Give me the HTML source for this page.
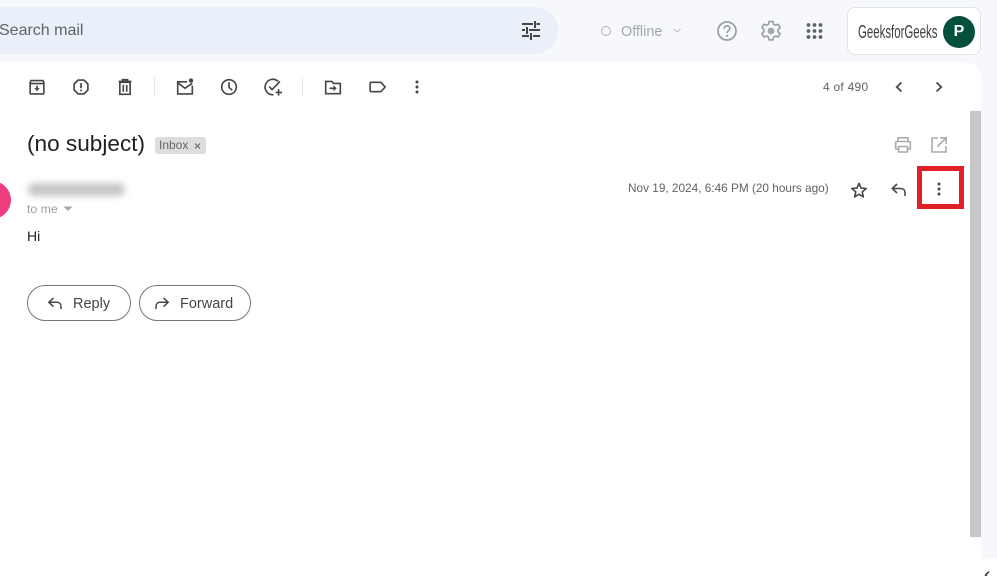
<!DOCTYPE html>
<html><head><meta charset="utf-8">
<style>
html,body{margin:0;padding:0;width:997px;height:576px;overflow:hidden;background:#f6f8fc;font-family:"Liberation Sans",sans-serif;}
#p{position:absolute;left:0;top:0;width:997px;height:576px;overflow:hidden;background:#f6f8fc}
.a{position:absolute;white-space:nowrap}
svg{position:absolute;overflow:visible;fill:none;stroke-linecap:butt}
.t{transform:scale(.86);transform-origin:50% 50%}
</style></head><body><div id="p">
<div class="a" style="left:-30px;top:7px;width:588px;height:47px;background:#e9f0fa;border-radius:24px"></div>
<div class="a" style="left:-1px;top:22px;font-size:16px;line-height:18px;color:#5f6368">Search mail</div>
<svg style="left:519px;top:18px" width="24" height="24" viewBox="0 0 24 24" stroke="#444746" stroke-width="2"><path d="M3 6h11M17.500 6H21M16 3v7M3 12h3M10 12h11M8 9v7M3 18h7M14 18h7M12 15v7"/></svg>
<div class="a" style="left:601px;top:26px;width:8px;height:8px;border:1.800px solid #b0b3b6;border-radius:50%"></div>
<div class="a" style="left:621px;top:24px;font-size:14.400px;line-height:16px;color:#a5a8ab">Offline</div>
<svg style="left:672px;top:28px" width="10" height="6" stroke="#c3c5c8" stroke-width="1.200"><path d="M1.500 1l3.500 3 3.500-3"/></svg>
<svg style="left:715px;top:19px" width="24" height="24" viewBox="0 0 24 24" stroke="#9a9da0" stroke-width="1.700"><circle cx="12" cy="12" r="9"/><path d="M9.200 9.700c0-1.700 1.300-2.800 2.900-2.800s2.800 1 2.800 2.500c0 2.200-2.800 2.300-2.800 4.600"/><path d="M12.100 15.800v2" stroke-width="1.900"/></svg>
<svg style="left:759px;top:19px" width="24" height="24" viewBox="0 0 24 24"><path d="M10 2.500h4l.5 2.700 2 1.100 2.600-1 2 3.400-2.100 1.800v2.300l2.100 1.700-2 3.500-2.600-1-2 1.200-.5 2.700h-4l-.5-2.700-2-1.200-2.600 1-2-3.500 2.100-1.700V10.500L2.900 8.700l2-3.400 2.600 1 2-1.100z" stroke="#9a9da0" stroke-width="1.600" stroke-linejoin="round"/><circle cx="12" cy="12" r="3.400" fill="#a5a8ab"/></svg>
<svg style="left:806px;top:22px" width="18" height="18"><g fill="#5f6368"><circle cx="2.500" cy="3" r="1.900"/><circle cx="8.500" cy="3" r="1.900"/><circle cx="14.500" cy="3" r="1.900"/><circle cx="2.500" cy="9" r="1.900"/><circle cx="8.500" cy="9" r="1.900"/><circle cx="14.500" cy="9" r="1.900"/><circle cx="2.500" cy="15" r="1.900"/><circle cx="8.500" cy="15" r="1.900"/><circle cx="14.500" cy="15" r="1.900"/></g></svg>
<div class="a" style="left:847px;top:7px;width:132px;height:46px;background:#fff;border:1px solid #e1e4e8;border-radius:8px"></div>
<div class="a" style="left:858px;top:22px;font-size:18px;line-height:20px;color:#3c4043;transform:scaleX(.635);transform-origin:0 0;width:120px">GeeksforGeeks</div>
<div class="a" style="left:943px;top:16px;width:32px;height:32px;border-radius:50%;background:#04503c;color:#fff;font-size:16px;font-weight:bold;line-height:32px;text-align:center">P</div>

<div class="a" style="left:-20px;top:62px;width:1001px;height:520px;background:#fff;border-radius:16px 16px 0 0"></div>

<svg class="t" style="left:25px;top:75px" width="24" height="24" viewBox="0 0 24 24" stroke="#444746" stroke-width="1.900"><path d="M5 4.500h14l1 2.500v12a1 1 0 0 1-1 1H5a1 1 0 0 1-1-1V7zM4 8h16"/><path d="M12 10.500v5" stroke-width="2"/><path d="M8.800 13.300h6.400L12 17z" fill="#444746" stroke="none"/></svg>
<svg class="t" style="left:69px;top:75px" width="24" height="24" viewBox="0 0 24 24" stroke="#444746" stroke-width="1.900"><path d="M8.500 4h7L20 8.500v7L15.500 20h-7L4 15.500v-7z" stroke-linejoin="round"/><path d="M12 7.500v6M12 15v2" stroke-width="2"/></svg>
<svg class="t" style="left:113px;top:75px" width="24" height="24" viewBox="0 0 24 24" stroke="#444746" stroke-width="1.900"><path d="M6 6.500h12V20.500H6zM4.500 5.500h15M9 5V3.500h6V5M10 9.500v8M14 9.500v8"/></svg>
<div class="a" style="left:154px;top:77px;width:1px;height:20px;background:#e6e8ea"></div>
<svg class="t" style="left:173px;top:75px" width="24" height="24" viewBox="0 0 24 24" stroke="#444746" stroke-width="1.900"><path d="M14.500 6H3.500v14h17V10.500"/><path d="M3.500 7L12 13.500l8.500-5.800"/><circle cx="19" cy="4.500" r="2.500" fill="#444746" stroke="none"/></svg>
<svg class="t" style="left:217px;top:75px" width="24" height="24" viewBox="0 0 24 24" stroke="#444746" stroke-width="1.900"><circle cx="12" cy="12" r="8.500"/><path d="M12 6.500v6l3.800 3.300"/></svg>
<svg class="t" style="left:261px;top:75px" width="24" height="24" viewBox="0 0 24 24" stroke="#444746" stroke-width="1.900"><path d="M18 5.500A9 9 0 1 0 12.500 21"/><path d="M7.500 11.500l3.500 3.500L20 5.500"/><path d="M18.500 14.500v7.500M15 18.300h7.500"/></svg>
<div class="a" style="left:302px;top:77px;width:1px;height:20px;background:#e6e8ea"></div>
<svg class="t" style="left:321px;top:75px" width="24" height="24" viewBox="0 0 24 24" stroke="#444746" stroke-width="1.900"><path d="M3.500 5.500h7l2 2.300h8v12h-17z"/><path d="M8 13.500h6.500"/><path d="M12.500 10l3.800 3.500-3.800 3.500z" fill="#444746" stroke="none"/></svg>
<svg class="t" style="left:365px;top:75px" width="24" height="24" viewBox="0 0 24 24" stroke="#444746" stroke-width="1.900"><path d="M4.500 6.500h12l5 5.500-5 5.500h-11a1.500 1.500 0 0 1-1.500-1.500V8z" stroke-linejoin="round"/></svg>
<svg style="left:405px;top:75px" width="24" height="24" viewBox="0 0 24 24"><g fill="#444746"><circle cx="12" cy="7" r="1.500"/><circle cx="12" cy="12" r="1.500"/><circle cx="12" cy="17" r="1.500"/></g></svg>

<div class="a" style="left:823px;top:80px;font-size:12px;line-height:15px;color:#5f6368;letter-spacing:.25px">4 of 490</div>
<svg style="left:892px;top:80px" width="14" height="14" stroke="#444746" stroke-width="1.800"><path d="M9.500 2.500L4.800 7l4.700 4.500"/></svg>
<svg style="left:932px;top:80px" width="14" height="14" stroke="#444746" stroke-width="1.800"><path d="M4.500 2.500L9.200 7l-4.700 4.500"/></svg>

<div class="a" style="left:27px;top:130px;font-size:22.600px;line-height:28px;color:#1f1f1f">(no subject)</div>
<div class="a" style="left:155px;top:137px;width:51px;height:17px;background:#dddddd;border-radius:3px"></div>
<div class="a" style="left:159px;top:137px;font-size:12px;line-height:16px;color:#666">Inbox</div>
<svg style="left:194px;top:142px" width="8" height="8" stroke="#666" stroke-width="1.100"><path d="M1 1.500l5 5M6 1.500l-5 5"/></svg>

<svg style="left:893px;top:135px" width="20" height="20" viewBox="0 0 20 20" stroke="#a9abae" stroke-width="1.600"><path d="M5 6.500V2.800h10v3.700M5 14H2.700V7.500a1 1 0 0 1 1-1h12.600a1 1 0 0 1 1 1V14H15M5.500 11.500h9V17h-9z"/></svg>
<svg style="left:929px;top:135px" width="20" height="20" viewBox="0 0 20 20" stroke="#a9abae" stroke-width="1.600"><path d="M9 3H3v14h14v-6M11 2.800h6.200V9M17 3L8.500 11.500"/></svg>

<div class="a" style="left:-27px;top:181px;width:38px;height:38px;border-radius:50%;background:#ee3d7f"></div>
<div class="a" style="left:28px;top:183px;width:97px;height:13px;background:#c6c6c6;border-radius:6px;filter:blur(3.500px)"></div>
<div class="a" style="left:27px;top:202px;font-size:12.300px;line-height:14px;color:#9a9da0">to me</div>
<svg style="left:63px;top:206px" width="10" height="6"><path d="M0.500 0.500h9L5 5z" fill="#a5a7aa"/></svg>
<div class="a" style="left:27px;top:228px;font-size:14px;line-height:17px;color:#222">Hi</div>

<div class="a" style="left:27px;top:285px;width:102px;height:34px;border:1px solid #747775;border-radius:18px"></div>
<svg style="left:46px;top:295px" width="18" height="18" viewBox="0 0 18 18" stroke="#444746" stroke-width="1.500"><path d="M7.500 3L2.800 7.300l4.700 4.400M3 7.300h8c2.500 0 4 1.800 4 4.200V14"/></svg>
<div class="a" style="left:73px;top:295px;font-size:14.500px;line-height:18px;color:#444746">Reply</div>
<div class="a" style="left:139px;top:285px;width:110px;height:34px;border:1px solid #747775;border-radius:18px"></div>
<svg style="left:153px;top:295px" width="18" height="18" viewBox="0 0 18 18" stroke="#444746" stroke-width="1.500"><path d="M10.500 3l4.700 4.300-4.700 4.400M15 7.300H7c-2.500 0-4 1.800-4 4.200V14"/></svg>
<div class="a" style="left:180px;top:295px;font-size:14.500px;line-height:18px;color:#444746">Forward</div>

<div class="a" style="left:628px;top:181px;font-size:11.800px;line-height:15px;color:#5f6368">Nov 19, 2024, 6:46 PM (20 hours ago)</div>
<svg style="left:849px;top:180px" width="20" height="20" viewBox="0 0 20 20" stroke="#444746" stroke-width="1.600"><path d="M10 3.300l2 4.800 5.200.4-4 3.400 1.200 5-4.400-2.700-4.400 2.700 1.200-5-4-3.400 5.200-.4z" stroke-linejoin="round"/></svg>
<svg style="left:889px;top:180px" width="20" height="20" viewBox="0 0 20 20" stroke="#444746" stroke-width="1.600"><path d="M8 4L3.300 8.500 8 13M3.500 8.500h8.500c2.500 0 4 1.800 4 4.200V16"/></svg>
<div class="a" style="left:917px;top:166px;width:37px;height:33px;border:5px solid #e02027"></div>
<svg style="left:927px;top:177px" width="24" height="24" viewBox="0 0 24 24"><g fill="#444746"><circle cx="12" cy="7" r="1.500"/><circle cx="12" cy="12" r="1.500"/><circle cx="12" cy="17" r="1.500"/></g></svg>

<div class="a" style="left:970px;top:111px;width:11px;height:426px;background:#c6c6c6"></div>
<div class="a" style="left:972px;top:558px;width:40px;height:40px;border-radius:50%;background:#fff"></div>
<svg style="left:984px;top:571px" width="10" height="7" stroke="#333" stroke-width="1.500"><path d="M5 0.500L1.500 4l3.500 3.500"/></svg>
</div></body></html>
